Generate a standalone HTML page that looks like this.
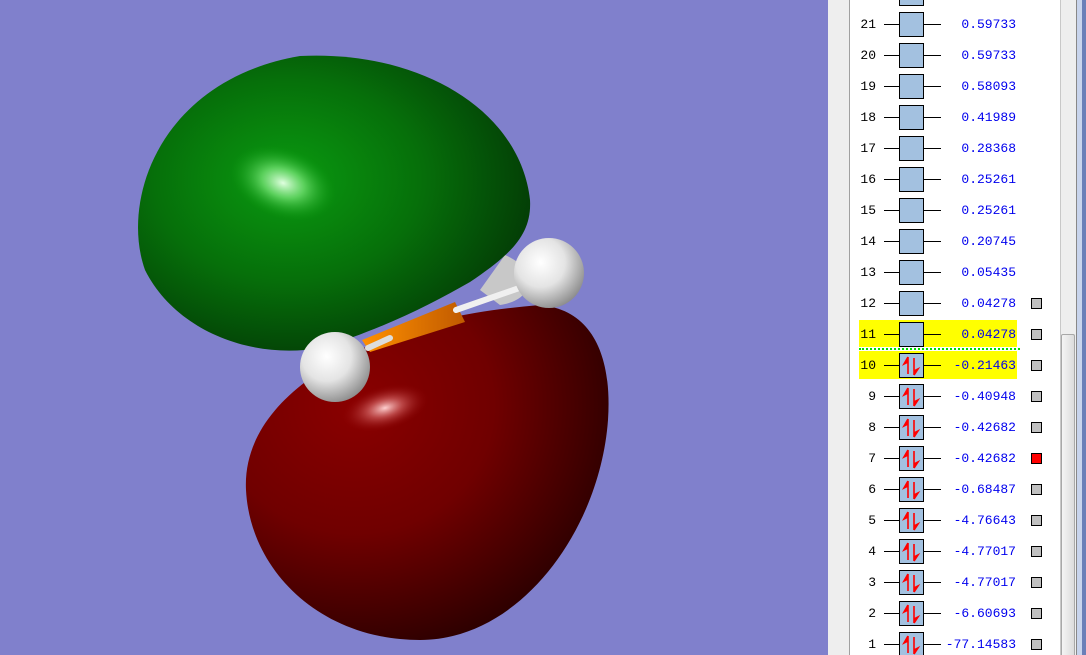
<!DOCTYPE html>
<html style="overflow:hidden"><head><meta charset="utf-8"><style>
html,body{margin:0;width:1086px;height:655px;overflow:hidden;}
body{background:#8080cc;position:relative;font-family:"Liberation Mono",monospace;}
#panel{position:absolute;left:828px;top:0;width:258px;height:655px;background:#eeeeee;}
#list{position:absolute;left:849px;top:0;width:210px;height:655px;background:#fff;border-left:1px solid #a0a0a0;border-right:1px solid #c8c8c8;}
#sb{position:absolute;left:1076px;top:0;width:1px;height:655px;background:#888;}
#sbr{position:absolute;left:1077px;top:0;width:5px;height:655px;background:#c8d4ec;}
#edge{position:absolute;left:1082px;top:0;width:4px;height:655px;background:#6a7fb8;}
#thumb{position:absolute;left:1061px;top:334px;width:14px;height:321px;background:linear-gradient(90deg,#f4f4f4,#dcdcdc);border:1px solid #a8a8a8;border-bottom:none;border-radius:2px 2px 0 0;box-sizing:border-box;}
.row{position:absolute;left:850px;width:210px;height:30px;font-size:13px;}
.num{position:absolute;right:184px;top:8px;color:#000;}
.l1{position:absolute;left:34px;top:15px;width:16px;height:1px;background:#000;}
.l2{position:absolute;left:73px;top:15px;width:18px;height:1px;background:#000;}
.box{position:absolute;left:49px;top:3px;width:23px;height:23px;background:#a3c1e0;border:1px solid #000;}
.val{position:absolute;right:44px;top:8px;color:#0000ee;}
.mk{position:absolute;left:181px;top:10px;width:9px;height:9px;background:#c0c0c0;border:1px solid #000;}
</style></head><body>
<svg width="828" height="655" style="position:absolute;left:0;top:0">
<defs>
<radialGradient id="g" cx="0.38" cy="0.42" r="0.75"><stop offset="0" stop-color="#0a9a10"/><stop offset="0.45" stop-color="#06700a"/><stop offset="1" stop-color="#022a04"/></radialGradient>
<radialGradient id="gh" cx="0.5" cy="0.5" r="0.5"><stop offset="0" stop-color="#e0ffe0"/><stop offset="0.4" stop-color="#70e070" stop-opacity="0.8"/><stop offset="1" stop-color="#0a9a10" stop-opacity="0"/></radialGradient>
<radialGradient id="rd" cx="0.3" cy="0.3" r="0.85"><stop offset="0" stop-color="#8a0000"/><stop offset="0.45" stop-color="#700000"/><stop offset="1" stop-color="#1a0000"/></radialGradient>
<radialGradient id="rh" cx="0.5" cy="0.5" r="0.5"><stop offset="0" stop-color="#ffd0d0"/><stop offset="0.4" stop-color="#d06060" stop-opacity="0.7"/><stop offset="1" stop-color="#8a0000" stop-opacity="0"/></radialGradient>
<radialGradient id="h" cx="0.38" cy="0.35" r="0.7"><stop offset="0" stop-color="#ffffff"/><stop offset="0.5" stop-color="#e4e4e4"/><stop offset="1" stop-color="#8a8a8a"/></radialGradient>
<linearGradient id="o" x1="0" y1="0" x2="1" y2="0"><stop offset="0" stop-color="#ff9000"/><stop offset="1" stop-color="#c05a00"/></linearGradient>
</defs>
<path d="M505,255 C540,270 535,300 500,305 L480,290 Z" fill="#c8c8c8"/>
<path d="M300,56 C420,50 520,110 530,200 C532,235 510,255 470,282 C430,305 380,330 320,348 C250,360 175,330 145,270 C120,200 160,80 300,56 Z" fill="url(#g)"/>
<ellipse cx="283" cy="183" rx="55" ry="35" fill="url(#gh)" transform="rotate(20 283 183)"/>
<path d="M370,345 C420,320 480,310 540,305 C595,310 612,360 608,420 C600,530 520,640 420,640 C320,640 250,570 246,490 C243,430 290,380 370,345 Z" fill="url(#rd)"/>
<ellipse cx="385" cy="408" rx="45" ry="22" fill="url(#rh)" transform="rotate(-15 385 408)"/>
<path d="M362,340 L455,302 L465,322 L370,352 Z" fill="url(#o)"/>
<line x1="368" y1="348" x2="390" y2="338" stroke="#ddd" stroke-width="6" stroke-linecap="round"/>
<line x1="456" y1="310" x2="525" y2="286" stroke="#f0f0f0" stroke-width="6" stroke-linecap="round"/>
<circle cx="549" cy="273" r="35" fill="url(#h)"/>
<circle cx="335" cy="367" r="35" fill="url(#h)"/>
</svg>
<div id="panel"></div><div id="list"></div>
<div id="thumb"></div><div id="sb"></div><div id="sbr"></div><div id="edge"></div>
<div style="position:absolute;left:859px;top:320px;width:158px;height:27px;background:#ffff00"></div>
<div style="position:absolute;left:859px;top:351px;width:158px;height:28px;background:#ffff00"></div>
<div style="position:absolute;left:859px;top:348px;width:161px;height:0;border-top:2px dotted #00dd00"></div>
<div class="row" style="top:-22px"><div class="l1"></div><div class="box"></div><div class="l2"></div></div>
<div class="row" style="top:9px"><span class="num">21</span><div class="l1"></div><div class="box"></div><div class="l2"></div><span class="val">0.59733</span></div>
<div class="row" style="top:40px"><span class="num">20</span><div class="l1"></div><div class="box"></div><div class="l2"></div><span class="val">0.59733</span></div>
<div class="row" style="top:71px"><span class="num">19</span><div class="l1"></div><div class="box"></div><div class="l2"></div><span class="val">0.58093</span></div>
<div class="row" style="top:102px"><span class="num">18</span><div class="l1"></div><div class="box"></div><div class="l2"></div><span class="val">0.41989</span></div>
<div class="row" style="top:133px"><span class="num">17</span><div class="l1"></div><div class="box"></div><div class="l2"></div><span class="val">0.28368</span></div>
<div class="row" style="top:164px"><span class="num">16</span><div class="l1"></div><div class="box"></div><div class="l2"></div><span class="val">0.25261</span></div>
<div class="row" style="top:195px"><span class="num">15</span><div class="l1"></div><div class="box"></div><div class="l2"></div><span class="val">0.25261</span></div>
<div class="row" style="top:226px"><span class="num">14</span><div class="l1"></div><div class="box"></div><div class="l2"></div><span class="val">0.20745</span></div>
<div class="row" style="top:257px"><span class="num">13</span><div class="l1"></div><div class="box"></div><div class="l2"></div><span class="val">0.05435</span></div>
<div class="row" style="top:288px"><span class="num">12</span><div class="l1"></div><div class="box"></div><div class="l2"></div><span class="val">0.04278</span><div class="mk"></div></div>
<div class="row" style="top:319px"><span class="num">11</span><div class="l1"></div><div class="box"></div><div class="l2"></div><span class="val">0.04278</span><div class="mk"></div></div>
<div id="occ"></div>
<script>
var d=[[10,"-0.21463"],[9,"-0.40948"],[8,"-0.42682"],[7,"-0.42682"],[6,"-0.68487"],[5,"-4.76643"],[4,"-4.77017"],[3,"-4.77017"],[2,"-6.60693"],[1,"-77.14583"]];
var h="";
var arr='<svg width="23" height="23" style="position:absolute;left:0;top:0"><path d="M8,3 L8,20 M8,3 L4,10 L8,8" stroke="#ff0000" stroke-width="1.6" fill="#ff0000"/><path d="M14,4 L14,21 M14,21 L18,15 L14,17" stroke="#ff0000" stroke-width="1.6" fill="#ff0000"/></svg>';
d.forEach(function(r,i){var t=350+31*i;h+='<div class="row" style="top:'+t+'px"><span class="num">'+r[0]+'</span><div class="l1"></div><div class="box">'+arr+'</div><div class="l2"></div><span class="val">'+r[1]+'</span><div class="mk"'+(r[0]==7?' style="background:#ff0000"':'')+'></div></div>';});
document.getElementById("occ").innerHTML=h;
</script>
</body></html>
